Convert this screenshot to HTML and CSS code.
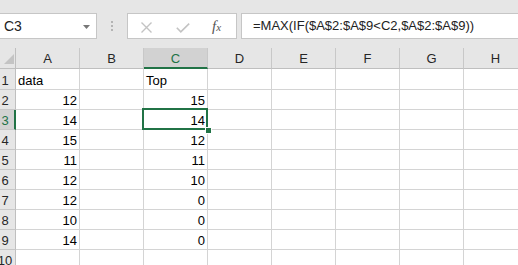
FILE: index.html
```html
<!DOCTYPE html>
<html lang="en">
<head>
	<meta charset="UTF-8">
	<meta name="viewport" content="width=device-width, initial-scale=1.0">
	<title>Sheet</title>
	<link rel="stylesheet" href="styles.css">
</head>
<body>
	<div class="formula-bar">
		<div class="name-box">
			<span>C3</span>
			<svg class="drop" width="7" height="4" viewBox="0 0 7 4"><path d="M0 0h7L3.5 4z" fill="#777"/></svg>
		</div>
		<div class="grip"><i></i><i></i><i></i></div>
		<div class="fx-buttons">
			<svg class="btn-x" width="11" height="11" viewBox="0 0 11 11"><path d="M0.5 0.5l10 10M10.5 0.5l-10 10" stroke="#c3c3c3" stroke-width="1.4" fill="none"/></svg>
			<svg class="btn-ok" width="14" height="10" viewBox="0 0 14 10"><path d="M0.8 4.8l4 4L13.2 0.6" stroke="#c3c3c3" stroke-width="1.6" fill="none"/></svg>
			<span class="fx">f<span>x</span></span>
		</div>
		<div class="formula-input">=MAX(IF($A$2:$A$9&lt;C2,$A$2:$A$9))</div>
	</div>

	<div class="sheet">
		<div class="corner"><svg width="10" height="10" viewBox="0 0 10 10"><path d="M10 0V10H0z" fill="#c4c4c4"/></svg></div>
		<div class="col-head">A</div>
		<div class="col-head">B</div>
		<div class="col-head active">C</div>
		<div class="col-head">D</div>
		<div class="col-head">E</div>
		<div class="col-head">F</div>
		<div class="col-head">G</div>
		<div class="col-head">H</div>

		<div class="row-head"><span>1</span></div>
		<div class="cell">data</div><div class="cell"></div><div class="cell">Top</div><div class="cell"></div><div class="cell"></div><div class="cell"></div><div class="cell"></div><div class="cell"></div>

		<div class="row-head"><span>2</span></div>
		<div class="cell num">12</div><div class="cell"></div><div class="cell num">15</div><div class="cell"></div><div class="cell"></div><div class="cell"></div><div class="cell"></div><div class="cell"></div>

		<div class="row-head active"><span>3</span></div>
		<div class="cell num">14</div><div class="cell"></div><div class="cell num selected">14</div><div class="cell"></div><div class="cell"></div><div class="cell"></div><div class="cell"></div><div class="cell"></div>

		<div class="row-head"><span>4</span></div>
		<div class="cell num">15</div><div class="cell"></div><div class="cell num">12</div><div class="cell"></div><div class="cell"></div><div class="cell"></div><div class="cell"></div><div class="cell"></div>

		<div class="row-head"><span>5</span></div>
		<div class="cell num">11</div><div class="cell"></div><div class="cell num">11</div><div class="cell"></div><div class="cell"></div><div class="cell"></div><div class="cell"></div><div class="cell"></div>

		<div class="row-head"><span>6</span></div>
		<div class="cell num">12</div><div class="cell"></div><div class="cell num">10</div><div class="cell"></div><div class="cell"></div><div class="cell"></div><div class="cell"></div><div class="cell"></div>

		<div class="row-head"><span>7</span></div>
		<div class="cell num">12</div><div class="cell"></div><div class="cell num">0</div><div class="cell"></div><div class="cell"></div><div class="cell"></div><div class="cell"></div><div class="cell"></div>

		<div class="row-head"><span>8</span></div>
		<div class="cell num">10</div><div class="cell"></div><div class="cell num">0</div><div class="cell"></div><div class="cell"></div><div class="cell"></div><div class="cell"></div><div class="cell"></div>

		<div class="row-head"><span>9</span></div>
		<div class="cell num">14</div><div class="cell"></div><div class="cell num">0</div><div class="cell"></div><div class="cell"></div><div class="cell"></div><div class="cell"></div><div class="cell"></div>

		<div class="row-head"><span>10</span></div>
		<div class="cell"></div><div class="cell"></div><div class="cell"></div><div class="cell"></div><div class="cell"></div><div class="cell"></div><div class="cell"></div><div class="cell"></div>
	</div>
</body>
</html>
```

FILE: styles.css
```css
*{
	margin: 0;
	padding: 0;
	box-sizing: border-box;
}

body{
	width: 518px;
	height: 265px;
	overflow: hidden;
	background-color: #fff;
	font-family: "Liberation Sans", Arial, sans-serif;
	color: #000;
}

/* formula bar */
.formula-bar{
	height: 48px;
	background-color: #e6e6e6;
	padding-top: 13px;
	display: flex;
	align-items: flex-start;
	white-space: nowrap;
}

.name-box{
	width: 98px;
	height: 26px;
	margin-left: -1px;
	background-color: #fff;
	border: 1px solid #c6c6c6;
	display: flex;
	align-items: center;
	justify-content: space-between;
	padding: 0 6px 0 4px;
	font-size: 14px;
	color: #222;
}

.name-box .drop{
	margin-top: 1px;
}

.grip{
	width: 30px;
	height: 26px;
	display: flex;
	flex-direction: column;
	align-items: center;
	justify-content: center;
	gap: 2px;
}

.grip i{
	width: 2px;
	height: 2px;
	background-color: #b4b4b4;
}

.fx-buttons{
	width: 110px;
	height: 26px;
	background-color: #fff;
	border: 1px solid #c6c6c6;
	display: flex;
	align-items: center;
	padding-left: 13px;
}

.btn-x{
	margin-top: 2px;
}

.btn-ok{
	margin-left: 24px;
	margin-top: 4px;
}

.fx{
	margin-left: 22px;
	font-family: "Liberation Serif", "Times New Roman", serif;
	font-style: italic;
	font-size: 15px;
	color: #555;
}

.fx span{
	font-size: 11px;
}

.formula-input{
	flex: 1;
	margin-left: 4px;
	height: 26px;
	background-color: #fff;
	border: 1px solid #c6c6c6;
	border-right: none;
	padding-left: 11px;
	font-size: 13px;
	line-height: 24px;
	color: #222;
}

/* sheet grid */
.sheet{
	display: grid;
	grid-template-columns: 16px repeat(8, 64px);
	grid-template-rows: 21px 21px repeat(9, 20px);
	font-size: 13px;
}

.corner{
	background-color: #e6e6e6;
	border-right: 1px solid #bfbfbf;
	border-bottom: 1px solid #bfbfbf;
	display: flex;
	align-items: flex-end;
	justify-content: flex-end;
	padding: 0 1px 4px 0;
}

.col-head{
	background-color: #e6e6e6;
	border-right: 1px solid #c8c8c8;
	border-bottom: 1px solid #bfbfbf;
	display: flex;
	align-items: center;
	justify-content: center;
	color: #262626;
	padding-top: 1px;
}

.col-head.active{
	background-color: #d2d2d2;
	color: #217346;
	border-bottom: 2px solid #217346;
}

.row-head{
	background-color: #e6e6e6;
	border-right: 1px solid #bfbfbf;
	border-bottom: 1px solid #c8c8c8;
	overflow: hidden;
	display: flex;
	align-items: flex-end;
	padding-bottom: 1px;
	color: #262626;
}

.row-head span{
	flex: none;
	width: 20px;
	margin-left: -5px;
	text-align: center;
	line-height: 15px;
}

.row-head.active{
	background-color: #d2d2d2;
	color: #217346;
	border-right: 2px solid #217346;
}

.cell{
	border-right: 1px solid #d4d4d4;
	border-bottom: 1px solid #d4d4d4;
	display: flex;
	align-items: flex-end;
	padding: 0 2px 1px 2px;
	line-height: 15px;
}

.cell.num{
	justify-content: flex-end;
}

.cell.selected{
	position: relative;
}

.cell.selected::after{
	content: "";
	position: absolute;
	top: -2px;
	left: -2px;
	right: -1px;
	bottom: -1px;
	border: 2px solid #217346;
}

.cell.selected::before{
	content: "";
	position: absolute;
	right: -4px;
	bottom: -4px;
	width: 5px;
	height: 5px;
	background-color: #217346;
	box-shadow: 0 0 0 1px #fff;
	z-index: 1;
}
```
